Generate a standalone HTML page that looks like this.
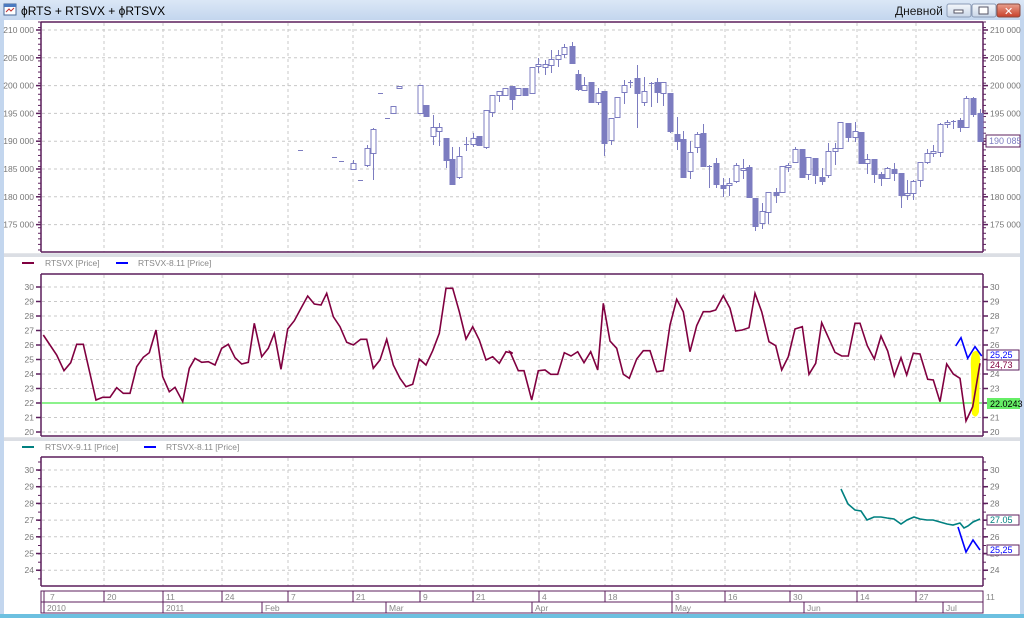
<!DOCTYPE html>
<html><head><meta charset="utf-8"><style>
html,body{margin:0;padding:0;width:1024px;height:618px;overflow:hidden;background:#fff;font-family:"Liberation Sans",sans-serif}
</style></head><body>
<svg id="s" width="1024" height="618" xmlns="http://www.w3.org/2000/svg" font-family="Liberation Sans, DejaVu Sans, sans-serif">
<defs><linearGradient id="tb" x1="0" y1="0" x2="0" y2="1"><stop offset="0" stop-color="#dbe7f6"/><stop offset="1" stop-color="#c3d6ee"/></linearGradient>
<linearGradient id="bt" x1="0" y1="0" x2="0" y2="1"><stop offset="0" stop-color="#f4f7fb"/><stop offset="1" stop-color="#c9d6e8"/></linearGradient>
<linearGradient id="bx" x1="0" y1="0" x2="0" y2="1"><stop offset="0" stop-color="#e8a08e"/><stop offset="1" stop-color="#c8402a"/></linearGradient></defs>
<rect x="0" y="0" width="1024" height="20" fill="url(#tb)"/>
<rect x="0" y="20" width="4" height="598" fill="#c3d6ee"/>
<rect x="1020" y="20" width="4" height="598" fill="#c3d6ee"/>
<rect x="0" y="614" width="1024" height="4" fill="#6cc0e0"/>
<rect x="4" y="4" width="12" height="11" fill="#fff" stroke="#4a6a9a"/><rect x="4" y="4" width="12" height="3" fill="#4a7ac0"/><path d="M6 12 L9 9 L11 11 L14 8" stroke="#c03030" fill="none"/>
<text x="21" y="15" font-size="12" fill="#000">ϕRTS + RTSVX + ϕRTSVX</text>
<text x="895" y="15" font-size="12" fill="#1a1a1a">Дневной</text>
<rect x="947" y="4" width="24" height="13" rx="2" fill="url(#bt)" stroke="#8a9ab5"/><rect x="954" y="10" width="9" height="3" fill="#fff" stroke="#556"/>
<rect x="972" y="4" width="24" height="13" rx="2" fill="url(#bt)" stroke="#8a9ab5"/><rect x="979" y="7" width="9" height="7" fill="#fff" stroke="#556"/>
<rect x="997" y="4" width="23" height="13" rx="2" fill="url(#bx)" stroke="#8a4a40"/><text x="1004" y="15" font-size="11" font-weight="bold" fill="#fff">✕</text>
<g id="g"></g>
</svg>
<script>
const g=document.getElementById('g');let h='';
const P='#5c1f5c',GC='#c8c8c8';
function line(x1,y1,x2,y2,c,w,d){h+=`<line x1="${x1}" y1="${y1}" x2="${x2}" y2="${y2}" stroke="${c}" stroke-width="${w||1}" ${d?'stroke-dasharray="'+d+'"':''}/>`}
function txt(x,y,t,c,a,s){h+=`<text x="${x}" y="${y}" font-size="${s||9}" fill="${c||'#777'}" ${a?'text-anchor="'+a+'"':''}>${t}</text>`}
const vx=[104,163,222,288,353,420,473,539,605,672,725,790,857,916];
function panel(top,bot,levels){
 h+=`<rect x="41" y="${top}" width="942" height="${bot-top}" fill="#fff"/>`;
 levels.forEach(l=>{line(42,l[1],982,l[1],GC,1,'3,3');});
 vx.forEach(x=>line(x,top+1,x,bot,GC,1,'3,3'));
 line(41,top,983,top,P,1.5);line(41,bot,983,bot,P,1.5);
 line(41,top,41,bot,P,1.5);line(983,top,983,bot,P,1.5);
 levels.forEach(l=>{line(36,l[1],41,l[1],P,1.5);line(983,l[1],988,l[1],P,1.5);txt(34,l[1]+3,l[0],'#777','end',8.5);txt(990,l[1]+3,l[0],'#777',null,8.5);});
 if(levels.length>1){const st=(levels[1][1]-levels[0][1])/(levels[0][2]||1);}
}
// panel1
let L1=[];['210 000','205 000','200 000','195 000','190 000','185 000','180 000','175 000'].forEach((t,i)=>L1.push([t,30+i*27.8]));
panel(22,252,L1);
for(let y=22;y<252;y+=5.56){line(38,y,41,y,P,1);line(983,y,986,y,P,1);}
// panel2
let L2=[];for(let v=30;v>=20;v--)L2.push([v,287+(30-v)*14.5]);
panel(274,436,L2);
// panel3
let L3=[];for(let v=30;v>=24;v--)L3.push([v,470+(30-v)*16.7]);
panel(457,586,L3);
for(let y=462;y<586;y+=8.35){line(38,y,41,y,P,1);line(983,y,986,y,P,1);}
// separators
h+=`<rect x="4" y="254" width="1016" height="3" fill="#eef0f4"/><line x1="4" y1="254" x2="1020" y2="254" stroke="#c8ccd4"/><line x1="4" y1="256" x2="1020" y2="256" stroke="#c8ccd4"/>`;
h+=`<rect x="4" y="438" width="1016" height="3" fill="#eef0f4"/><line x1="4" y1="438" x2="1020" y2="438" stroke="#c8ccd4"/><line x1="4" y1="440" x2="1020" y2="440" stroke="#c8ccd4"/>`;
// legends
line(22,263,34,263,'#800040',2);txt(45,266,'RTSVX [Price]','#888',null,8.5);
line(116,263,128,263,'#0000ff',2);txt(138,266,'RTSVX-8.11 [Price]','#888',null,8.5);
line(22,447,34,447,'#008080',2);txt(45,450,'RTSVX-9.11 [Price]','#888',null,8.5);
line(144,447,156,447,'#0000ff',2);txt(156+10,450,'RTSVX-8.11 [Price]','#888',null,8.5);
// candles [x,top,bot,filled,wt,wb]
const C=[[300,150,150,0],[334,157,157,0],[341,161,161,0],[353,163,169,0,160,170],[360,180,180,0],[367,148,165,0,145,167],[373,129,153,0,128,180],[380,93,93,0],[387,118,118,0],[393,106,113,0],[399,86,88,0],
[420,85,113,0],[426,105,116,1],[433,127,136,0,115,145],[439,127,131,0,123,146],[446,138,160,1,138,168],[452,159,184,1,147,184],[459,156,177,0,147,179],[466,144,145,0,137,151],[473,138,144,0,133,147],[479,136,145,1],[486,110,147,0,110,149],[492,95,112,0,95,117],[499,91,95,0,91,102],[505,88,95,0],[512,86,99,1,86,110],[518,88,95,0],[525,88,95,1],[532,67,93,0],[538,64,66,0,58,73],[545,64,67,0,60,75],[551,59,65,0,50,73],[558,55,59,0,50,67],[564,47,54,0,44,58],[572,46,63,1,42,63],
[578,74,89,1,70,91],[584,85,90,0,77,91],[591,82,102,1],[598,93,102,0,88,105],[604,91,143,1,91,156],[611,118,140,0,118,145],[617,97,117,0],[624,85,92,0,80,104],[630,82,83,0,80,88],[637,78,93,1,65,128],[644,91,102,0,77,106],[651,83,84,0,82,107],[657,82,92,1,78,103],[663,82,93,0,82,106],[670,93,131,1,93,133],[677,134,141,1,117,150],[683,139,177,1,131,177],[690,152,171,0,141,179],[697,134,147,0,132,153],[703,133,166,1,124,166],[709,166,167,0,165,188],[716,163,184,1,158,188],[723,185,188,1,178,197],[729,183,185,0,178,196],[736,165,181,0,163,183],[743,168,170,0,159,179],[749,167,197,1,165,197],[755,198,226,1,198,231],[762,211,223,0,203,229],[768,192,212,0,192,224],[776,192,195,1,188,203],[782,166,192,0],[788,165,167,0,163,172],[795,149,162,0,147,163],[802,149,177,1],[808,157,174,0,157,180],[815,158,175,1,158,184],[822,177,181,1,168,185],[828,151,175,0,143,178],[835,148,151,0,143,165],[840,122,148,0],[848,123,137,1,123,142],[855,131,137,0,122,142],[861,132,163,1,132,163],[867,159,163,0,154,174],[874,159,174,1,159,183],[881,174,178,1,172,186],[887,168,178,0,167,179],[894,169,173,1,163,181],[901,173,195,1,173,208],[907,193,195,0,180,200],[913,181,193,0,180,200],[920,162,180,0,162,187],[927,153,162,0,149,164],[933,151,153,0,145,157],[940,124,152,0,123,157],[947,122,124,0,120,128],[953,121,122,0,120,129],[960,120,127,1,118,132],[966,98,127,0,96,127],[973,98,114,1,97,117],[980,113,141,1,109,141]];
const CC='#7c7cc0';
C.forEach(c=>{const[x,t,b,f,wt,wb]=c;if(wt!==undefined)line(x+.5,wt,x+.5,wb,CC,1);
 if(b-t<1.5){line(x-2,t+.5,x+3,t+.5,CC,1);}else h+=`<rect x="${x-2}" y="${t+.5}" width="5" height="${b-t}" fill="${f?CC:'#fff'}" stroke="${CC}" stroke-width="1"/>`;});
// panel2 lines
line(42,403,982,403,'#66ee66',1.5);
const z9=[[10,165],[50,225],[72,272],[92,248],[110,193],[130,193],[168,360],[188,352],[210,352],[230,323],[250,340],[270,340],[290,260],[310,232],[328,218],[348,150],[368,290],[388,335],[405,322],[428,365],[448,265],[465,235],[485,247],[505,245],[525,255],[545,205],[565,193],[585,233],[605,252],[625,247],[643,130],[665,230],[685,205],[703,160],[723,268],[743,147],[763,122],[783,85],[803,48],[823,72],[843,75],[860,40],[880,110],[900,140],[920,187],[940,195],[962,178],[980,178],[1000,265],[1020,240],[1040,178],[1060,255],[1080,295],[1098,320],[1118,313],[1138,237],[1158,255],[1178,212],[1198,160],[1218,25],[1238,25],[1258,95],[1278,177],[1298,140],[1318,180],[1338,240],[1358,230],[1378,250],[1398,215],[1418,220]];
const z10=[[0,215],[25,272],[42,272],[65,360],[85,272],[105,270],[122,283],[143,283],[163,218],[183,228],[203,215],[222,248],[242,215],[263,270],[280,70],[300,183],[320,205],[340,283],[358,295],[380,237],[400,212],[420,212],[440,275],[460,272],[480,135],[500,58],[520,95],[540,215],[560,137],[580,95],[600,95],[617,90],[640,47],[660,85],[677,153],[697,150],[717,143],[735,40],[755,95],[777,185],[797,197],[815,270],[835,230],[855,147],[877,140],[897,283],[917,250],[935,128],[955,172],[975,217],[995,228],[1015,228],[1035,130],[1050,130],[1072,197],[1093,237],[1113,168],[1133,213],[1153,288],[1173,233],[1190,285],[1210,220],[1230,222],[1253,298],[1270,300],[1290,365],[1310,252],[1330,282],[1350,295],[1368,423],[1388,380],[1410,250]];
h+=`<path d="M973 352 Q980 348 980 360 L979 412 Q976 420 972 414 L971 370 Q970 356 973 352Z" fill="#ffff00"/>`;
let pts=z9.map(p=>[40+p[0]/3,280+p[1]/3]).concat(z10.map(p=>[510+p[0]/3,280+p[1]/3]));
h+=`<polyline points="${pts.map(p=>p[0].toFixed(1)+','+p[1].toFixed(1)).join(' ')}" fill="none" stroke="#800040" stroke-width="1.6"/>`;
const bl=[[1337,198],[1353,173],[1373,235],[1395,200],[1415,228]].map(p=>(510+p[0]/3).toFixed(1)+','+(280+p[1]/3).toFixed(1)).join(' ');
h+=`<polyline points="${bl}" fill="none" stroke="#0000ff" stroke-width="1.6"/>`;
h+=`<rect x="987" y="350" width="32" height="10" fill="#fff" stroke="${P}"/>`;txt(990,358,'25,25','#0000ff',null,9);
h+=`<rect x="987" y="360" width="32" height="10" fill="#fff" stroke="${P}"/>`;txt(990,368,'24,73','#800040',null,9);
h+=`<rect x="987" y="398" width="33" height="11" fill="#66ee66"/>`;txt(990,407,'22.0243','#000',null,9);
// panel1 price label
h+=`<rect x="986" y="135" width="34" height="12" fill="#fff" stroke="${P}"/>`;txt(989,144,'190 085','#7c7cc0',null,9);
// panel3
const tl=[[841,489],[848,504],[855,510],[861,511],[867,520],[874,517],[881,517],[887,518],[894,519],[901,524],[907,520],[914,517],[920,519],[927,520],[933,520],[940,522],[947,524],[953,525],[960,523],[964,528],[968,526],[973,522],[980,519]];
h+=`<polyline points="${tl.join(' ')}" fill="none" stroke="#008080" stroke-width="1.6"/>`;
h+=`<polyline points="958,527 966,552 973,540 980,550" fill="none" stroke="#0000ff" stroke-width="1.6"/>`;
h+=`<rect x="987" y="515" width="32" height="10" fill="#fff" stroke="${P}"/>`;txt(990,523,'27.05','#008080',null,9);
h+=`<rect x="987" y="545" width="32" height="10" fill="#fff" stroke="${P}"/>`;txt(990,553,'25,25','#0000ff',null,9);
// date axis
h+=`<rect x="41" y="591" width="942" height="11" fill="#fff" stroke="${P}"/><rect x="41" y="602" width="942" height="11" fill="#fff" stroke="${P}"/>`;
line(44,591,44,613,P,1);
const d1=[[47,'7'],[104,'20'],[163,'11'],[222,'24'],[288,'7'],[353,'21'],[420,'9'],[473,'21'],[539,'4'],[605,'18'],[672,'3'],[725,'16'],[790,'30'],[857,'14'],[916,'27']];
d1.forEach(d=>{if(d[0]>50)line(d[0],591,d[0],602,P,1);txt(d[0]+3,600,d[1],'#888',null,8.5);});
txt(986,600,'11','#888',null,8.5);
const d2=[[44,'2010'],[163,'2011'],[262,'Feb'],[386,'Mar'],[532,'Apr'],[672,'May'],[804,'Jun'],[943,'Jul']];
d2.forEach(d=>{if(d[0]>50)line(d[0],602,d[0],613,P,1);txt(d[0]+3,611,d[1],'#888',null,8.5);});
g.innerHTML=h;
</script>
</body></html>
